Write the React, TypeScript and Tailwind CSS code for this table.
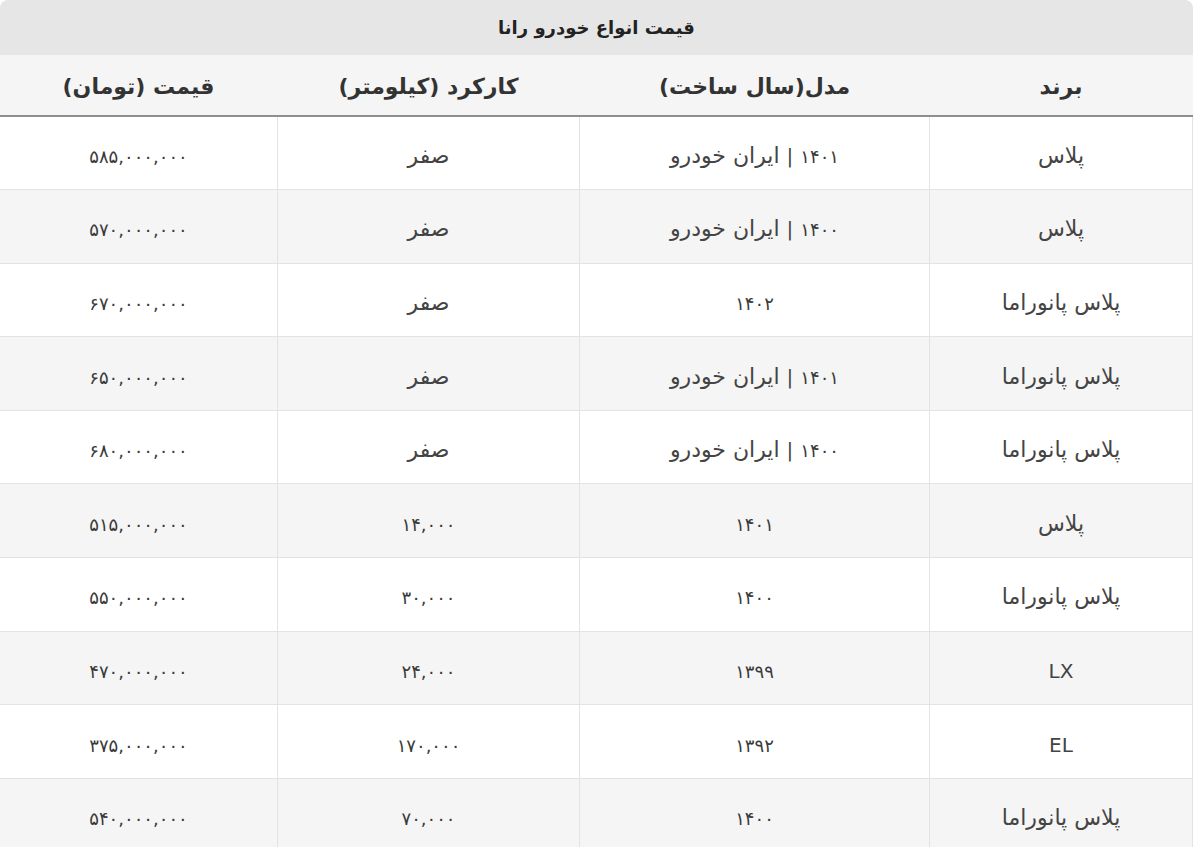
type Row = { brand: string; year: string; maker?: string; km: string; price: string };

const rows: Row[] = [
  { brand: "پلاس", year: "۱۴۰۱", maker: "ایران خودرو", km: "صفر", price: "۵۸۵,۰۰۰,۰۰۰" },
  { brand: "پلاس", year: "۱۴۰۰", maker: "ایران خودرو", km: "صفر", price: "۵۷۰,۰۰۰,۰۰۰" },
  { brand: "پلاس پانوراما", year: "۱۴۰۲", km: "صفر", price: "۶۷۰,۰۰۰,۰۰۰" },
  { brand: "پلاس پانوراما", year: "۱۴۰۱", maker: "ایران خودرو", km: "صفر", price: "۶۵۰,۰۰۰,۰۰۰" },
  { brand: "پلاس پانوراما", year: "۱۴۰۰", maker: "ایران خودرو", km: "صفر", price: "۶۸۰,۰۰۰,۰۰۰" },
  { brand: "پلاس", year: "۱۴۰۱", km: "۱۴,۰۰۰", price: "۵۱۵,۰۰۰,۰۰۰" },
  { brand: "پلاس پانوراما", year: "۱۴۰۰", km: "۳۰,۰۰۰", price: "۵۵۰,۰۰۰,۰۰۰" },
  { brand: "LX", year: "۱۳۹۹", km: "۲۴,۰۰۰", price: "۴۷۰,۰۰۰,۰۰۰" },
  { brand: "EL", year: "۱۳۹۲", km: "۱۷۰,۰۰۰", price: "۳۷۵,۰۰۰,۰۰۰" },
  { brand: "پلاس پانوراما", year: "۱۴۰۰", km: "۷۰,۰۰۰", price: "۵۴۰,۰۰۰,۰۰۰" },
];

// digits render larger in DejaVu than the Persian letters, so they get their own size
const Num = ({ children }: { children: string }) => (
  <span className="text-[18px] text-[#3a3a3a]">{children}</span>
);

const isNum = (s: string) => /[۰-۹]/.test(s);

const App = () => {
  return (
    <div className="min-h-screen bg-white font-['DejaVu_Sans',sans-serif] text-[#333]">
      <div dir="rtl" className="w-[1193px]">
        {/* Title */}
        <div className="flex h-[55px] items-center justify-center rounded-t-lg bg-[#e6e6e6] text-[18px] font-bold text-[#222]">
          قیمت انواع خودرو رانا
        </div>

        <table className="w-full table-fixed border-collapse">
          <colgroup>
            <col className="w-[263px]" />
            <col className="w-[350px]" />
            <col className="w-[302px]" />
            <col className="w-[278px]" />
          </colgroup>
          <thead>
            <tr className="h-[61px] border-b-2 border-[#8f8f8f] bg-[#f5f5f5] text-[22px] font-bold text-[#333]">
              <th className="pt-[3px] text-center">برند</th>
              <th className="pt-[3px] text-center">مدل(سال ساخت)</th>
              <th className="pt-[3px] text-center">کارکرد (کیلومتر)</th>
              <th className="pt-[3px] text-center">قیمت (تومان)</th>
            </tr>
          </thead>
          <tbody className="text-[22px] text-[#444]">
            {rows.map((r, i) => (
              <tr
                key={i}
                className={`h-[73.6px] ${i % 2 === 1 ? "bg-[#f5f5f5]" : "bg-white"}`}
              >
                <td className="border border-[#e3e3e3] pt-[5px] text-center">
                  {r.brand.length < 3 ? <span className="text-[20px]">{r.brand}</span> : r.brand}
                </td>
                <td className="border border-[#e3e3e3] pt-[5px] text-center">
                  <Num>{r.year}</Num>
                  {r.maker && (
                    <>
                      {" "}
                      <span className="text-[20px]">|</span> {r.maker}
                    </>
                  )}
                </td>
                <td className="border border-[#e3e3e3] pt-[5px] text-center">
                  {isNum(r.km) ? <Num>{r.km}</Num> : r.km}
                </td>
                <td className="border border-[#e3e3e3] pt-[5px] text-center">
                  <Num>{r.price}</Num>
                </td>
              </tr>
            ))}
          </tbody>
        </table>
      </div>
    </div>
  );
};

export default App;
